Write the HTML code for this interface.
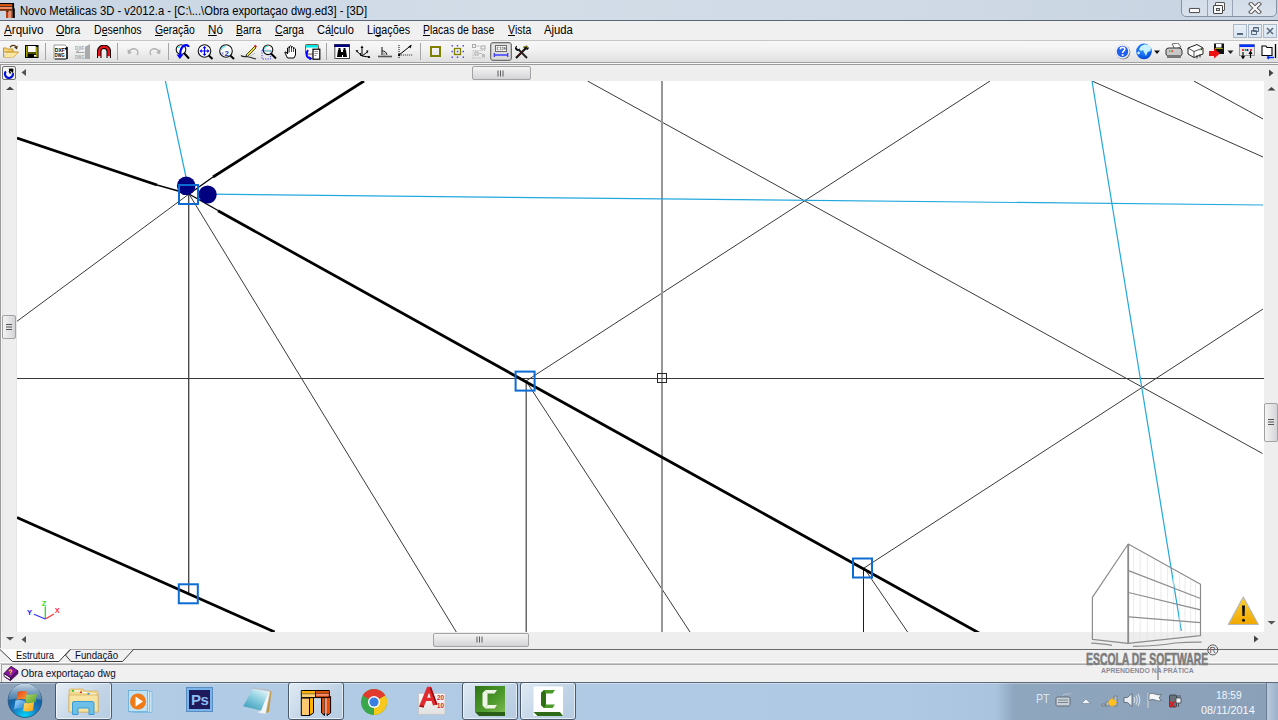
<!DOCTYPE html>
<html><head><meta charset="utf-8">
<style>
*{margin:0;padding:0;box-sizing:border-box}
html,body{width:1278px;height:720px;overflow:hidden;background:#f0f0f0;font-family:"Liberation Sans",sans-serif;position:relative}
.a{position:absolute}
#title{left:0;top:0;width:1278px;height:20px;background:linear-gradient(90deg,#c9d5e3 0%,#d3dde8 40%,#d0dae6 70%,#c7d3e1 100%)}
#titleline{left:0;top:20px;width:1278px;height:1px;background:#5b6577}
#menubar{left:0;top:21px;width:1278px;height:19px;background:#f0f0f0}
.mi{position:absolute;top:22px;font-size:12px;line-height:16px;color:#000;white-space:pre;transform-origin:0 0}
.mi u{text-decoration:none;position:relative}.mi u:after{content:"";position:absolute;left:0;right:0;top:12px;height:1px;background:#000}
#toolbar{left:0;top:41px;width:1278px;height:21px;background:linear-gradient(#f8f8f8,#f2f2f2 40%,#dfdfdf)}
.sep{position:absolute;top:43px;width:1px;height:17px;background:#a5a5a5}
.sb{background:#eeeeee}
</style></head><body>
<div id="title" class="a"></div>
<div id="titleline" class="a"></div>
<div class="a" style="left:0;top:40px;width:1278px;height:1px;background:#c6c6c6"></div>
<div id="toolbar" class="a"></div>
<!-- app icon -->
<svg class="a" style="left:0;top:0" width="16" height="20" viewBox="0 0 16 20">
<rect x="0" y="3" width="14" height="1.5" fill="#000"/>
<rect x="0" y="4.3" width="13" height="2" fill="#e54f00"/>
<rect x="0" y="6.2" width="12.5" height="0.8" fill="#3a1a08"/>
<rect x="0" y="7" width="12.5" height="2" fill="#f28a64"/>
<rect x="0" y="9" width="12.5" height="1.8" fill="#7a2800"/>
<rect x="12.3" y="3.5" width="1.8" height="14.5" fill="#000"/>
<rect x="6" y="11" width="2.5" height="7" fill="#b84010"/>
<rect x="8.5" y="11" width="2.5" height="7" fill="#f5906a"/>
<rect x="11" y="11" width="1.3" height="7" fill="#e05000"/>
<rect x="14" y="8.5" width="0.8" height="9.5" fill="#000"/>
<rect x="6.5" y="10.8" width="2" height="1" fill="#111"/>
</svg>
<div class="a" style="left:20px;top:2.6px;font-size:12px;line-height:16px;color:#000;white-space:pre;transform:scaleX(0.936);transform-origin:0 0">Novo Metálicas 3D - v2012.a - [C:\...\Obra exportaçao dwg.ed3] - [3D]</div>
<!-- caption buttons -->
<div class="a" style="left:1181px;top:-3px;width:96px;height:20px;border:1px solid #8693a5;border-radius:0 0 5px 5px;background:linear-gradient(#d2dce8,#d8e1ec)"></div>
<div class="a" style="left:1207px;top:0;width:1px;height:16px;background:#97a3b3"></div>
<div class="a" style="left:1232px;top:0;width:1px;height:16px;background:#97a3b3"></div>
<div class="a" style="left:1189px;top:8px;width:11px;height:5px;border:1px solid #555;border-radius:1px;background:#fafafa;box-shadow:0 0 1px #888"></div>
<div class="a" style="left:1215px;top:2px;width:10px;height:9px;border:1px solid #555;border-radius:1px;background:#f4f4f4"></div>
<div class="a" style="left:1213px;top:5px;width:10px;height:9px;border:1px solid #444;border-radius:1px;background:#fafafa"></div>
<div class="a" style="left:1216px;top:8px;width:4px;height:3px;border:1px solid #555;background:#cfd8e2"></div>
<svg class="a" style="left:1248px;top:2px" width="14" height="12" viewBox="0 0 14 12">
<path d="M3 2 L11 10 M11 2 L3 10" stroke="#5a5a5a" stroke-width="4.2" stroke-linecap="square"/>
<path d="M3 2 L11 10 M11 2 L3 10" stroke="#fafafa" stroke-width="2.2" stroke-linecap="square"/>
</svg>
<!-- menu -->
<div class="mi" style="left:3.5px;transform:scaleX(0.97)"><u>A</u>rquivo</div>
<div class="mi" style="left:56px;transform:scaleX(0.91)"><u>O</u>bra</div>
<div class="mi" style="left:94px;transform:scaleX(0.88)">D<u>e</u>senhos</div>
<div class="mi" style="left:155px;transform:scaleX(0.865)"><u>G</u>eração</div>
<div class="mi" style="left:208px;transform:scaleX(0.97)"><u>N</u>ó</div>
<div class="mi" style="left:236px;transform:scaleX(0.86)"><u>B</u>arra</div>
<div class="mi" style="left:274.5px;transform:scaleX(0.88)"><u>C</u>arga</div>
<div class="mi" style="left:317px;transform:scaleX(0.92)">Cá<u>l</u>culo</div>
<div class="mi" style="left:367px;transform:scaleX(0.895)">Li<u>g</u>ações</div>
<div class="mi" style="left:423px;transform:scaleX(0.87)"><u>P</u>lacas de base</div>
<div class="mi" style="left:507.5px;transform:scaleX(0.87)"><u>V</u>ista</div>
<div class="mi" style="left:543.5px;transform:scaleX(0.94)">Ajuda</div>
<!-- MDI buttons -->
<div class="a" style="left:1233px;top:24px;width:14px;height:14px;border:1px solid #a9b8c9;background:linear-gradient(#e9f0f7,#d9e5f1)"></div>
<div class="a" style="left:1248px;top:24px;width:14px;height:14px;border:1px solid #a9b8c9;background:linear-gradient(#e9f0f7,#d9e5f1)"></div>
<div class="a" style="left:1263px;top:24px;width:14px;height:14px;border:1px solid #a9b8c9;background:linear-gradient(#e9f0f7,#d9e5f1)"></div>
<div class="a" style="left:1237px;top:33px;width:6px;height:2px;background:#56687c"></div>
<svg class="a" style="left:1248px;top:24px" width="14" height="14" viewBox="0 0 14 14"><path d="M5.5 3.5h5v4h-5z M3.5 6.5h5v4h-5z" fill="none" stroke="#56687c" stroke-width="1"/><path d="M5.5 3.5h5v1h-5z M3.5 6.5h5v1h-5z" fill="#56687c"/></svg>
<svg class="a" style="left:1263px;top:24px" width="14" height="14" viewBox="0 0 14 14"><path d="M4 4L10 10M10 4L4 10" stroke="#56687c" stroke-width="1.5"/></svg>

<div class="a" style="left:0;top:62px;width:1278px;height:1px;background:#a0a0a0"></div>
<div class="a" style="left:0;top:63px;width:1278px;height:1px;background:#f8f8f8"></div>
<div class="a" style="left:0;top:64px;width:1278px;height:1px;background:#9a9a9a"></div>
<!--ICONS-->
<div class="sep" style="left:45px"></div>
<div class="sep" style="left:117px"></div>
<div class="sep" style="left:168px"></div>
<div class="sep" style="left:326px"></div>
<div class="sep" style="left:420px"></div>
<svg class="a" style="left:2px;top:44px" width="17" height="14" viewBox="0 0 17 14">
<path d="M8 3.2 Q11 -0.2 14 2.6" fill="none" stroke="#5a3a10" stroke-width="1.3"/>
<path d="M12.2 3.6 L15.8 1.6 L15 5.6z" fill="#4a3008"/>
<path d="M1.5 4 h3 l1 1 h5.5 v3 h-9.5z" fill="#f3d37a" stroke="#c89628" stroke-width="1"/>
<path d="M1.5 4.5 v8.5 h10 l5-5 h-11 l-3.5 5" fill="#f5dc8a" stroke="#c8962a" stroke-width="1"/>
<path d="M4 9 h11 l-4 4 h-9z" fill="#f8e6a0"/>
</svg>
<svg class="a" style="left:25px;top:45px" width="14" height="13" viewBox="0 0 14 13">
<rect x="0" y="0" width="13.5" height="13" rx="0.5" fill="#000"/>
<rect x="1" y="1" width="1.6" height="11" fill="#a0a000"/>
<rect x="11" y="2" width="1.6" height="10" fill="#a0a000"/>
<rect x="3" y="1" width="7.8" height="6" fill="#fff"/>
<rect x="2.6" y="7.5" width="8.5" height="1" fill="#a0a000"/>
<circle cx="10" cy="10.8" r="1.1" fill="#fff"/>
</svg>
<svg class="a" style="left:53px;top:44px" width="16" height="16" viewBox="0 0 16 16">
<path d="M1 1 h11 l2 2 v12 h-13z" fill="#fff" stroke="#9a9a9a" stroke-width="1"/>
<path d="M14 3 v12 M12 5 l2-1" stroke="#000" stroke-width="1.5" fill="none"/>
<text x="1.8" y="8" font-family="Liberation Sans" font-size="5.5" font-weight="bold" fill="#000" textLength="10" lengthAdjust="spacingAndGlyphs">DXF</text>
<text x="1.8" y="13" font-family="Liberation Sans" font-size="5.5" font-weight="bold" fill="#000" textLength="10" lengthAdjust="spacingAndGlyphs">DWG</text>
<path d="M2 15 h11" stroke="#222" stroke-width="1"/>
</svg>
<svg class="a" style="left:75px;top:44px" width="16" height="15" viewBox="0 0 16 15">
<text x="0" y="6" font-family="Liberation Sans" font-size="6" font-weight="bold" fill="#a8a8a8" textLength="9.5" lengthAdjust="spacingAndGlyphs">DXF</text>
<path d="M1 8.5 h8.5 M1 8.5 l3-2" stroke="#a8a8a8" stroke-width="1.1" fill="none"/>
<text x="0" y="14.5" font-family="Liberation Sans" font-size="6" font-weight="bold" fill="#a8a8a8" textLength="9.5" lengthAdjust="spacingAndGlyphs">DWG</text>
<path d="M10 3 l5-3 v15 h-5z" fill="#aaa"/>
</svg>
<svg class="a" style="left:97px;top:45px" width="14" height="14" viewBox="0 0 14 14">
<path d="M2.2 13 V6.5 A4.8 4.8 0 0 1 11.8 6.5 V13" fill="none" stroke="#000" stroke-width="4.6"/>
<path d="M2.2 12 V6.5 A4.8 4.8 0 0 1 11.8 6.5 V12" fill="none" stroke="#e8141c" stroke-width="2.6"/>
<rect x="1" y="11.3" width="2.4" height="1.6" fill="#fff"/><rect x="10.6" y="11.3" width="2.4" height="1.6" fill="#fff"/>
</svg>
<svg class="a" style="left:127px;top:47px" width="13" height="9" viewBox="0 0 13 9"><path d="M2 4 Q6 0.5 9.5 2.5 Q12 4.5 10 8" fill="none" stroke="#b0b0b0" stroke-width="1.3"/><path d="M0.5 2 L0.8 7 L5 6z" fill="#b0b0b0"/></svg>
<svg class="a" style="left:148px;top:47px" width="13" height="9" viewBox="0 0 13 9"><path d="M11 4 Q7 0.5 3.5 2.5 Q1 4.5 3 8" fill="none" stroke="#b0b0b0" stroke-width="1.3"/><path d="M12.5 2 L12.2 7 L8 6z" fill="#b0b0b0"/></svg>
<svg class="a" style="left:175px;top:44px" width="16" height="16" viewBox="0 0 16 16">
<circle cx="6" cy="5.5" r="4.8" fill="#fff" stroke="#111" stroke-width="1.1"/>
<path d="M9 9 L14 14.5" stroke="#000" stroke-width="2"/>
<path d="M3 4 L5 2" stroke="#0ff" stroke-width="1"/>
<path d="M13.5 3 Q13.5 1 11 1.2 Q7 1.5 5.5 7 L5 11" fill="none" stroke="#0000ff" stroke-width="2.2"/>
<path d="M1.5 10.5 L4.8 15 L8.5 10.5z" fill="#0000ff"/>
</svg>
<svg class="a" style="left:197px;top:44px" width="17" height="16" viewBox="0 0 17 16">
<circle cx="7.5" cy="7" r="6.3" fill="#fff" stroke="#111" stroke-width="1.1"/>
<path d="M11.8 11.5 L15.5 15" stroke="#000" stroke-width="2"/>
<path d="M7.5 2 L5.5 4.2 h4z M7.5 12 L5.5 9.8 h4z M2.5 7 L4.7 5 v4z M12.5 7 L10.3 5 v4z" fill="#0000ff"/>
<path d="M7.5 3.5 V10.5 M3.5 7 H11.5" stroke="#0000ff" stroke-width="1.1"/>
</svg>
<svg class="a" style="left:218px;top:44px" width="17" height="16" viewBox="0 0 17 16">
<circle cx="8" cy="7" r="6.3" fill="#fff" stroke="#111" stroke-width="1.1"/>
<path d="M12.3 11.5 L16 15" stroke="#000" stroke-width="2"/>
<path d="M3 6 Q4 3 7 2.5" fill="none" stroke="#00e8ff" stroke-width="1"/>
<text x="3.3" y="11" font-family="Liberation Sans" font-size="5" fill="#3a3ac0">x</text>
<text x="6.5" y="11.5" font-family="Liberation Sans" font-size="8" font-weight="bold" fill="#3030b0">2</text>
</svg>
<svg class="a" style="left:240px;top:44px" width="17" height="16" viewBox="0 0 17 16">
<path d="M1 11.5 Q3 13 6 12.5 Q10 13 14 14.5 L16 15" fill="none" stroke="#222" stroke-width="1.2"/>
<path d="M6 11 L14.5 2.5 L16 4 L7.5 12.5z" fill="#f0e020" stroke="#222" stroke-width="0.8"/>
<path d="M14 2 L15.2 0.8 L17 2.6 L15.8 3.8z" fill="#e01010"/>
<path d="M5 13 L6 11 L7.5 12.5z" fill="#333"/>
<path d="M9 13 Q12 11 15 9" fill="none" stroke="#aaa" stroke-width="0.8"/>
</svg>
<svg class="a" style="left:261px;top:44px" width="17" height="16" viewBox="0 0 17 16">
<rect x="1" y="6" width="8.5" height="9" fill="none" stroke="#4040ff" stroke-width="1" stroke-dasharray="1.2 1.2"/>
<circle cx="7" cy="5.8" r="4.8" fill="rgba(255,255,255,0.6)" stroke="#111" stroke-width="1.1"/>
<path d="M10 9.5 L15 14.5" stroke="#000" stroke-width="2"/>
<path d="M3.5 5 Q4.5 2.3 7 1.8" fill="none" stroke="#0ee" stroke-width="1"/>
<path d="M3 7 H11" stroke="#40a0a0" stroke-width="1"/>
</svg>
<svg class="a" style="left:284px;top:45px" width="14" height="14" viewBox="0 0 14 14">
<path d="M3.5 13 L1 8 Q0.5 6.5 2 7 L3.5 9 V3 Q4.5 1.5 5.5 3 V1.5 Q6.5 0 7.5 1.5 V2.5 Q8.5 1 9.5 2.5 V3.5 Q10.5 2.5 11.5 4 V10 L10 13z" fill="#fff" stroke="#000" stroke-width="1"/>
<path d="M5.5 3 v4 M7.5 2 v5 M9.5 3 v4" stroke="#000" stroke-width="0.7"/>
<path d="M4 3 v5 h1.5 v-5z" fill="#999"/>
</svg>
<svg class="a" style="left:305px;top:44px" width="16" height="16" viewBox="0 0 16 16">
<rect x="0.5" y="0.5" width="13" height="9.5" rx="1" fill="#fff" stroke="#603020" stroke-width="0.8"/>
<rect x="1" y="1" width="12" height="2.6" fill="#00e8e8"/>
<path d="M3 6 Q0.5 10 2.5 13 L5 14.5" fill="none" stroke="#0000ff" stroke-width="2"/>
<path d="M4 12.2 L7.5 14.5 L4.5 16.5z" fill="#0000ff"/>
<rect x="8" y="5.2" width="6.8" height="10" fill="#fff" stroke="#000" stroke-width="1.2"/>
<path d="M9.5 7.5 h3.5 M9.5 9.5 h3.5 M9.5 11.5 h2" stroke="#777" stroke-width="0.8"/>
</svg>
<svg class="a" style="left:334px;top:44px" width="16" height="15" viewBox="0 0 16 15">
<rect x="0.5" y="0.5" width="15" height="14" fill="#fff" stroke="#444" stroke-width="1"/>
<rect x="0.5" y="0.5" width="15" height="2.5" fill="#000080"/>
<rect x="0" y="3" width="1.5" height="12" fill="#888"/>
<path d="M3 13 L4 6 h3 v2 h2 v-2 h3 l1 7 h-4 v-2 h-1 v2z" fill="#000"/>
<rect x="4.5" y="4" width="2" height="3" fill="#000"/><rect x="9.5" y="4" width="2" height="3" fill="#000"/>
</svg>
<svg class="a" style="left:355px;top:45px" width="16" height="13" viewBox="0 0 16 13">
<path d="M7 11 V2 M7 11 L1.5 6 M7 11 L13 6.5 M7 11 L14 12" stroke="#000" stroke-width="1" fill="none"/>
<path d="M7 0.5 L5.5 3 h3z M0.5 5 L3.5 5.5 L2 7.5z M13.5 5.5 L11 5.5 L12.5 8z" fill="#000"/>
<circle cx="14" cy="12" r="1.1" fill="#000"/>
<path d="M5.5 8 Q5 10 6 11" stroke="#000" stroke-width="1" fill="none"/>
</svg>
<svg class="a" style="left:377px;top:46px" width="16" height="12" viewBox="0 0 16 12">
<path d="M5 1 V9" stroke="#222" stroke-width="1.1"/>
<path d="M1 10.5 H15" stroke="#555" stroke-width="1.6"/>
<path d="M5 5 Q9 4.5 10 9" stroke="#222" stroke-width="1" fill="none"/>
<rect x="6" y="7" width="2" height="2" fill="none" stroke="#777" stroke-width="0.6"/>
</svg>
<svg class="a" style="left:398px;top:44px" width="16" height="16" viewBox="0 0 16 16">
<path d="M1 1 V15" stroke="#000" stroke-width="1" stroke-dasharray="1 1"/>
<path d="M3 11 H15" stroke="#444" stroke-width="1" stroke-dasharray="1.2 0.8"/>
<path d="M1 11 L13 1.5" stroke="#000" stroke-width="1"/>
<circle cx="1.2" cy="11" r="1.2" fill="#000"/>
<path d="M13.8 0.8 L10.5 2.2 L12.5 4.5z" fill="#000"/>
</svg>
<div class="a" style="left:430px;top:46px;width:11px;height:11px;border:2px solid #808000"></div>
<svg class="a" style="left:451px;top:45px" width="14" height="13" viewBox="0 0 14 13"><rect x="3.5" y="3.5" width="6" height="6" fill="none" stroke="#808000" stroke-width="1.3"/><rect x="0.5" y="0.10000000000000009" width="1.4" height="1.4" fill="#3838ff"/><rect x="0.5" y="5.8" width="1.4" height="1.4" fill="#3838ff"/><rect x="0.5" y="11.5" width="1.4" height="1.4" fill="#3838ff"/><rect x="5.8" y="0.10000000000000009" width="1.4" height="1.4" fill="#3838ff"/><rect x="5.8" y="5.8" width="1.4" height="1.4" fill="#3838ff"/><rect x="5.8" y="11.5" width="1.4" height="1.4" fill="#3838ff"/><rect x="11.600000000000001" y="0.10000000000000009" width="1.4" height="1.4" fill="#3838ff"/><rect x="11.600000000000001" y="5.8" width="1.4" height="1.4" fill="#3838ff"/><rect x="11.600000000000001" y="11.5" width="1.4" height="1.4" fill="#3838ff"/></svg>
<svg class="a" style="left:472px;top:44px" width="14" height="15" viewBox="0 0 14 15">
<rect x="0.5" y="0.5" width="3" height="3" fill="none" stroke="#aaa" stroke-width="1"/>
<path d="M4.5 2 h3" stroke="#bbb" stroke-width="1"/>
<rect x="9" y="2" width="4" height="3" fill="none" stroke="#aaa" stroke-width="1"/>
<path d="M1 6.5 h13 M1 14 h13 M1 6.5 v8" stroke="#aaa" stroke-width="0.8" stroke-dasharray="1 1.2"/>
<rect x="3" y="8" width="3" height="3" fill="none" stroke="#aaa" stroke-width="1"/>
<path d="M7 9.5 h3" stroke="#bbb" stroke-width="1"/><rect x="10" y="10" width="3" height="3" fill="#bbb"/>
</svg>
<div class="a" style="left:490px;top:42px;width:22px;height:19px;border:1px solid #707070;border-radius:3px;background:linear-gradient(#e6e6e6,#d8d8d8);box-shadow:inset 0 0 0 1px #bdbdbd"></div>
<svg class="a" style="left:493px;top:45px" width="16" height="13" viewBox="0 0 16 13">
<rect x="2.5" y="0.5" width="11" height="6" fill="#fff" stroke="#6a6a6a" stroke-width="1"/>
<path d="M5.5 2.2 h-1.3 v2.6 h1.3 M6.5 2.2 h1.3 v2.6 h-1.3 M8.8 2.2 h1.2 v2.6 h-1.2 M11.3 2 v1.8 h1.2 M12 2 v3" fill="none" stroke="#555" stroke-width="0.7"/>
<path d="M1.5 10 H14.5" stroke="#3c3cff" stroke-width="1.5"/>
<path d="M1.3 8 v4 M14.7 8 v4" stroke="#3c3cff" stroke-width="1.3"/>
</svg>
<svg class="a" style="left:514px;top:45px" width="15" height="14" viewBox="0 0 15 14">
<path d="M2 13 L12 3" stroke="#000" stroke-width="2"/>
<path d="M3 12 L10 5" stroke="#7a1010" stroke-width="0.8"/>
<path d="M13 13 L5 5" stroke="#222" stroke-width="2"/>
<path d="M9 2 L12.5 0.5 L15 3 L13.5 5 L11 3.8z" fill="#111"/>
<path d="M10 2 L12.5 1.2 L14 3" stroke="#a0a000" stroke-width="1" fill="none"/>
<path d="M1 4 Q1 1 3 0.8 L2.5 2.8 L4 4.3 L6 3.5 Q6 6 3 6z" fill="#000"/>
</svg>
<svg class="a" style="left:1114px;top:43px" width="17" height="17" viewBox="0 0 17 17">
<circle cx="9.2" cy="9.2" r="7" fill="#333" opacity="0.7"/>
<circle cx="8.5" cy="8.5" r="7" fill="#f4f8ff" stroke="#c8d0e0" stroke-width="0.5"/>
<circle cx="8.5" cy="8.5" r="5.7" fill="#2060f0"/>
<path d="M6.3 6.3 Q6.5 4.2 8.6 4.2 Q10.8 4.3 10.8 6.3 Q10.8 7.6 9.3 8.3 Q8.6 8.8 8.6 10" fill="none" stroke="#fff" stroke-width="1.6"/>
<rect x="7.8" y="11.2" width="1.7" height="1.7" fill="#fff"/>
</svg>
<svg class="a" style="left:1135px;top:43px" width="27" height="17" viewBox="0 0 27 17">
<defs><radialGradient id="gg" cx="0.45" cy="0.35" r="0.75"><stop offset="0" stop-color="#3a9cff"/><stop offset="0.7" stop-color="#0a5ae8"/><stop offset="1" stop-color="#0030b0"/></radialGradient></defs>
<circle cx="9" cy="8.4" r="7.8" fill="url(#gg)"/>
<path d="M4 6.5 L6 3 L10 1.2 L14 2 L16 5 L15.5 8 L12.5 9 L11 13 L9.5 10 L8 7 L6 8z" fill="#c8f2ff"/>
<circle cx="3.6" cy="10" r="1.4" fill="#c8f2ff"/>
<path d="M19 7.5 h6 l-3 3.5z" fill="#111"/>
</svg>
<svg class="a" style="left:1165px;top:43px" width="18" height="16" viewBox="0 0 18 16">
<path d="M7 1 L13 0 L16 4 L10 6z" fill="#fff" stroke="#444" stroke-width="0.8"/>
<path d="M1 7 Q1 5 4 5 H14 Q17 5 17 8 V11 Q17 13 14 13 H4 Q1 13 1 11z" fill="#c8c8c8" stroke="#333" stroke-width="1"/>
<path d="M2 12 H16 V15 H2z" fill="#777"/>
<rect x="4" y="7.5" width="1.5" height="1.2" fill="#0c0"/><rect x="6.5" y="7.5" width="1.5" height="1.2" fill="#e00"/>
</svg>
<svg class="a" style="left:1187px;top:44px" width="17" height="15" viewBox="0 0 17 15">
<path d="M1 4 L10 0.5 L16 4 L16 10 L7 13.5 L1 10z" fill="#fff" stroke="#222" stroke-width="1"/>
<path d="M1 4 L7 7.5 L16 4 M7 7.5 V13.5" stroke="#222" stroke-width="0.8" fill="none"/>
<path d="M10 11 v3.5 M13 10 v3.5" stroke="#333" stroke-width="1"/>
<rect x="12" y="5" width="1.5" height="1.2" fill="#0c0"/><rect x="14" y="5" width="1.3" height="1.2" fill="#e00"/>
</svg>
<svg class="a" style="left:1209px;top:43px" width="26" height="17" viewBox="0 0 26 17">
<rect x="5" y="0.5" width="10" height="10.5" fill="#111"/>
<rect x="7" y="1" width="5.5" height="3.5" fill="#fff"/>
<rect x="6" y="5" width="8" height="1" fill="#a0a000"/>
<path d="M0 8 L5 8 L5 5.5 L11 10.5 L5 15.5 L5 13 L0 13z" fill="#ee1111"/>
<path d="M18.5 7.5 h6 l-3 3.5z" fill="#222"/>
</svg>
<svg class="a" style="left:1239px;top:44px" width="16" height="15" viewBox="0 0 16 15">
<rect x="0.5" y="0.5" width="15" height="11" fill="#e8e8e8" stroke="#888" stroke-width="0.8"/>
<rect x="0.5" y="0.5" width="15" height="2.5" fill="#0030ff"/>
<circle cx="4" cy="6" r="1" fill="#e00"/><circle cx="6.5" cy="6" r="1" fill="#0a0"/><circle cx="8.5" cy="6" r="1" fill="#00c"/><circle cx="12" cy="6" r="1" fill="#e00"/>
<path d="M4 8 v6 M2.5 12 L4 14.5 L5.5 12 M11.5 14 v-6 M10 10 L11.5 7.5 L13 10" stroke="#000" stroke-width="1.1" fill="none"/>
</svg>
<svg class="a" style="left:1261px;top:44px" width="17" height="16" viewBox="0 0 17 16">
<path d="M1 2 h4 l1 1.5 h5 v8 H1z" fill="#fff" stroke="#000" stroke-width="1.1"/>
<path d="M14.5 0 V14" stroke="#000" stroke-width="1.3"/>
<path d="M6 13.5 H13 M6 13.5 L8 12 M6 13.5 L8 15" stroke="#0030ff" stroke-width="1.3" fill="none"/>
</svg>
<!--/ICONS-->
<!-- top scrollbar -->
<div class="a sb" style="left:0;top:65px;width:1278px;height:16px"></div>
<!-- left border + left scrollbar -->
<div class="a" style="left:0;top:65px;width:1px;height:584px;background:#9a9a9a"></div><div class="a" style="left:1px;top:65px;width:1px;height:584px;background:#f6f6f6"></div>
<div class="a sb" style="left:2px;top:81px;width:15px;height:567px;border-left:1px solid #e4e4e4;border-right:1px solid #e6e6e6"></div>
<!-- right scrollbar -->
<div class="a sb" style="left:1264px;top:81px;width:14px;height:551px"></div>
<!-- bottom scrollbar -->
<div class="a sb" style="left:2px;top:632px;width:1276px;height:16px"></div>
<!-- drawing -->
<div class="a" style="left:17px;top:81px;width:1247px;height:551px;background:#fff"></div>
<svg class="a" style="left:17px;top:81px" width="1247" height="551" viewBox="17 81 1247 551">
<g stroke="#3a3a3a" stroke-width="1" fill="none">
<line x1="189" y1="194" x2="17" y2="321.3"/>
<line x1="189" y1="194" x2="456.3" y2="632"/>
<line x1="526" y1="381" x2="990" y2="81"/>
<line x1="526" y1="381" x2="690" y2="632"/>
<line x1="587.5" y1="81" x2="1262.5" y2="453.5"/>
<line x1="864" y1="568" x2="907.6" y2="632"/>
<line x1="864" y1="568" x2="1263" y2="309"/>
<line x1="1092" y1="81" x2="1263" y2="157"/>
<line x1="1193.8" y1="81" x2="1263" y2="119"/>
</g>
<g stroke="#333">
<line x1="188.72" y1="194" x2="188.72" y2="594" stroke-width="1.22"/>
<line x1="526.17" y1="383" x2="526.17" y2="632" stroke-width="1.1"/>
</g>
<rect x="863" y="568" width="1" height="64" fill="#1e1e1e"/>
<rect x="661" y="81" width="2" height="551" fill="#969696"/>
<rect x="17" y="378" width="1247" height="1" fill="#3a3a3a"/>
<rect x="657.5" y="373.5" width="9" height="9" fill="none" stroke="#262626" stroke-width="1"/>
<g stroke="#000" stroke-width="2.75" fill="none">
<line x1="17" y1="138" x2="157" y2="185"/>
<line x1="364" y1="81" x2="213" y2="177"/>
<polyline points="218,210.8 480,356.3 700,478.2 979,633"/>
<line x1="17" y1="517.6" x2="274.6" y2="632"/>
</g>
<g stroke="#000" stroke-width="1.3" fill="none">
<line x1="157" y1="185" x2="189" y2="194"/>
<line x1="213" y1="177" x2="189" y2="194"/>
<line x1="189" y1="194" x2="218" y2="210.5"/>
</g>
<g stroke="#22a8dc" stroke-width="1.2" fill="none">
<line x1="165.4" y1="81" x2="186" y2="177"/>
<line x1="207" y1="194.2" x2="1263" y2="205"/>
<line x1="1092" y1="81" x2="1181.3" y2="631"/>
</g>
<g fill="#000080">
<circle cx="186.2" cy="185.8" r="9.3"/>
<circle cx="207.6" cy="194.5" r="9.1"/>
</g>
<g stroke="#0c6cd4" stroke-width="2" fill="none">
<rect x="179" y="185" width="19" height="19"/>
<rect x="515.6" y="371.6" width="19" height="19"/>
<rect x="853" y="558.5" width="19" height="19"/>
<rect x="178.8" y="584.3" width="19" height="19"/>
</g>
</svg>
<!--SB-->
<!-- top scroll restore btn -->
<div class="a" style="left:2px;top:66px;width:14px;height:14px;border:1px solid #6e6e6e;border-radius:2px;background:#f4f4f4"></div>
<svg class="a" style="left:3px;top:67px" width="12" height="12" viewBox="0 0 12 12"><path d="M2.9 4.4 A4 4 0 1 0 9.9 6.3" fill="none" stroke="#0010e0" stroke-width="2.2"/><path d="M5.5 1.8 H10.2 V6.5 Z" fill="#000"/><rect x="6" y="1.8" width="4.2" height="2.2" fill="#000"/><path d="M6.3 4 L7.5 6.5" stroke="#000" stroke-width="1.6"/></svg>
<svg class="a" style="left:20px;top:68px" width="8" height="10" viewBox="0 0 8 10"><path d="M6 1 L1.5 4.5 L6 8z" fill="#555"/></svg>
<svg class="a" style="left:1266px;top:68px" width="10" height="10" viewBox="0 0 10 10"><path d="M3 1.5 L7.5 5 L3 8.5z" fill="#444"/></svg>
<div class="a" style="left:472px;top:66px;width:59px;height:14px;border:1px solid #a2a2a2;border-radius:2px;background:linear-gradient(#f4f4f4,#e6e6e8 45%,#d4d4d8)"></div>
<svg class="a" style="left:496px;top:69px" width="10" height="9" viewBox="0 0 10 9"><path d="M2 1.5v6M4.5 1.5v6M7 1.5v6" stroke="#5a5a5a" stroke-width="1"/></svg>
<!-- left scrollbar -->
<svg class="a" style="left:4px;top:84px" width="12" height="8" viewBox="0 0 12 8"><path d="M2 6 L6 2.5 L10 6z" fill="#444"/></svg>
<div class="a" style="left:2px;top:315px;width:14px;height:24px;border:1px solid #a2a2a2;border-radius:2px;background:linear-gradient(90deg,#f4f4f4,#e6e6e8 45%,#d4d4d8)"></div>
<svg class="a" style="left:4px;top:322px" width="10" height="10" viewBox="0 0 10 10"><path d="M2 2.5h6M2 5h6M2 7.5h6" stroke="#555" stroke-width="1.1"/></svg>
<svg class="a" style="left:4px;top:635px" width="12" height="8" viewBox="0 0 12 8"><path d="M2 2 L6 5.5 L10 2z" fill="#555"/></svg>
<!-- right scrollbar -->
<svg class="a" style="left:1265px;top:84px" width="12" height="8" viewBox="0 0 12 8"><path d="M2.5 6.5 L6.5 3 L10.5 6.5z" fill="#444"/></svg>
<div class="a" style="left:1264px;top:403px;width:14px;height:39px;border:1px solid #a2a2a2;border-radius:2px;background:linear-gradient(90deg,#f4f4f4,#e6e6e8 45%,#d4d4d8)"></div>
<svg class="a" style="left:1266px;top:417px" width="10" height="10" viewBox="0 0 10 10"><path d="M2 2.5h6M2 5h6M2 7.5h6" stroke="#555" stroke-width="1.1"/></svg>
<svg class="a" style="left:1265px;top:619px" width="12" height="8" viewBox="0 0 12 8"><path d="M2.5 2 L6.5 5.5 L10.5 2z" fill="#555"/></svg>
<!-- bottom scrollbar -->
<svg class="a" style="left:20px;top:635px" width="8" height="10" viewBox="0 0 8 10"><path d="M6 1 L1.5 4.5 L6 8z" fill="#555"/></svg>
<div class="a" style="left:433px;top:633px;width:96px;height:14px;border:1px solid #a2a2a2;border-radius:2px;background:linear-gradient(#f4f4f4,#e6e6e8 45%,#d4d4d8)"></div>
<svg class="a" style="left:475px;top:635px" width="10" height="9" viewBox="0 0 10 9"><path d="M2 1.5v6M4.5 1.5v6M7 1.5v6" stroke="#5a5a5a" stroke-width="1"/></svg>
<svg class="a" style="left:1251px;top:634px" width="10" height="10" viewBox="0 0 10 10"><path d="M3 1.5 L7.5 5 L3 8.5z" fill="#444"/></svg>
<!--/SB-->
<!-- tab strip -->
<div class="a" style="left:0;top:649px;width:1278px;height:13px;background:#f0f0f0"></div>
<div class="a" style="left:0;top:648px;width:1278px;height:1px;background:#ededed"></div><div class="a" style="left:70px;top:649px;width:1208px;height:1px;background:#6a6a6a"></div>
<svg class="a" style="left:0;top:648px" width="140" height="15" viewBox="0 648 140 15">
<path d="M70.5 649.5 L65.5 655 L71 661.5 H122.5 L133.5 649.5" fill="#f0f0f0" stroke="#3a3a3a" stroke-width="1"/>
<path d="M-1 649 L12.5 662 H59 L70.5 649z" fill="#fcfcfc"/>
<path d="M0 649.5 L12.5 661.5 H59 L70 649.5" fill="none" stroke="#3a3a3a" stroke-width="1"/>
</svg>
<div class="a" style="left:16px;top:650px;font-size:10px;line-height:11px;color:#0a0a28;white-space:pre;transform:scaleX(0.936);transform-origin:0 0">Estrutura</div>
<div class="a" style="left:74.5px;top:650px;font-size:10px;line-height:11px;color:#0a0a28;white-space:pre;transform:scaleX(0.97);transform-origin:0 0">Fundação</div>
<!-- status -->
<div class="a" style="left:0;top:662px;width:1278px;height:1px;background:#fafafa"></div>
<div class="a" style="left:0;top:663px;width:1278px;height:1px;background:#c8c8c8"></div>
<div class="a" style="left:0;top:664px;width:1278px;height:18px;background:#f0f0f0"></div>
<div class="a" style="left:1px;top:665px;width:1px;height:17px;background:#a0a0a0"></div>
<div class="a" style="left:1px;top:664px;width:1277px;height:1px;background:#a8a8a8"></div>
<svg class="a" style="left:2px;top:664px" width="18" height="18" viewBox="2 664 18 18">
<path d="M4 673.5 L10.5 677.5 L10.5 680.5 L4 676.5z" fill="#f4f4f4" stroke="#2a0a30" stroke-width="0.8"/>
<path d="M10.5 677.5 L17.8 670.8 V673.8 L10.5 680.5z" fill="#6a0a80" stroke="#2a0a30" stroke-width="0.8"/>
<path d="M4 673.5 L11 666.3 L17.8 670.8 L10.5 677.5z" fill="#8c14a8" stroke="#2a0a30" stroke-width="0.9"/>
<path d="M5 677 L10.5 680.5" stroke="#6a0a80" stroke-width="1"/>
<text x="8.5" y="674.5" font-family="Liberation Sans" font-size="7" font-weight="bold" fill="#ffe600" transform="rotate(-8 10 672)">?</text>
</svg>
<div class="a" style="left:20.5px;top:666px;font-size:11px;line-height:15px;color:#0a0a28;white-space:pre;transform:scaleX(0.90);transform-origin:0 0">Obra exportaçao dwg</div>
<!-- taskbar -->
<div class="a" style="left:0;top:682px;width:1278px;height:38px;background:linear-gradient(90deg,#b2cce6 0,#afc9e4 900px,#aac4df 996px,#8ea6be 1014px,#8aa0b8 1278px)"></div>
<div class="a" style="left:0;top:682px;width:56px;height:38px;background:#8ea2b9"></div>
<div class="a" style="left:0;top:682px;width:1278px;height:1px;background:#5c6a78"></div>
<div class="a" style="left:0;top:683px;width:1278px;height:1px;background:rgba(255,255,255,0.35)"></div>
<div class="a" style="left:1266px;top:683px;width:12px;height:37px;border-left:1px solid #6a7c90;background:linear-gradient(90deg,#b8cadd,#9cb2c8)"></div>
<!-- start orb -->
<svg class="a" style="left:6px;top:682px" width="38" height="38" viewBox="0 0 38 38">
<defs>
<radialGradient id="orb" cx="0.5" cy="1" r="0.9"><stop offset="0" stop-color="#00e0ff"/><stop offset="0.45" stop-color="#1a78c0"/><stop offset="1" stop-color="#0c4a80"/></radialGradient>
<linearGradient id="orbt" x1="0" y1="0" x2="0" y2="1"><stop offset="0" stop-color="#e0eaf2" stop-opacity="0.9"/><stop offset="1" stop-color="#7fa0c0" stop-opacity="0.5"/></linearGradient>
</defs>
<circle cx="19" cy="18.6" r="16.8" fill="url(#orb)" stroke="#2a5a88" stroke-width="1"/>
<path d="M2.5 18 A16.5 16.5 0 0 1 35.5 18 Q19 14 2.5 18z" fill="url(#orbt)"/>
<defs>
<linearGradient id="fr" x1="0" y1="0" x2="1" y2="1"><stop offset="0" stop-color="#e8401a"/><stop offset="1" stop-color="#f8a030"/></linearGradient>
<linearGradient id="fg" x1="0" y1="0" x2="1" y2="1"><stop offset="0" stop-color="#b0d860"/><stop offset="1" stop-color="#5aa030"/></linearGradient>
<linearGradient id="fb" x1="0" y1="0" x2="1" y2="1"><stop offset="0" stop-color="#a8d8ff"/><stop offset="1" stop-color="#2080d0"/></linearGradient>
<linearGradient id="fy" x1="0" y1="0" x2="1" y2="1"><stop offset="0" stop-color="#ffe070"/><stop offset="1" stop-color="#f8a010"/></linearGradient>
</defs>
<path d="M11.5 10 Q16 8.5 21 9.5 L20 17.5 Q15 16.5 10.5 18z" fill="url(#fr)"/>
<path d="M20.5 12.5 Q25.5 13.5 31 11.5 L29.5 20 Q24.5 21.5 19.5 20.5z" fill="url(#fg)"/>
<path d="M9.5 18.5 Q14 17.5 19 19 L17.5 27 Q13 25.5 8 27.5z" fill="url(#fb)"/>
<path d="M18.5 20.5 Q23 22 28 20 L27 28.5 Q22 30 17 29z" fill="url(#fy)"/>
</svg>
<!-- buttons -->
<div class="a" style="left:55px;top:682px;width:57px;height:38px;border:1px solid #4a5a6c;border-radius:3px;background:linear-gradient(135deg,#e6eef6,#c2d4e6 60%,#b8cde2);box-shadow:inset 0 0 0 1px rgba(255,255,255,0.6)"></div>
<div class="a" style="left:288px;top:682px;width:56px;height:38px;border:1px solid #4a5a6c;border-radius:3px;background:linear-gradient(135deg,#e0eaf4,#c0d3e6 60%,#b6cbe1);box-shadow:inset 0 0 0 1px rgba(255,255,255,0.6)"></div>
<div class="a" style="left:462px;top:682px;width:56px;height:38px;border:1px solid #4a5a6c;border-radius:3px;background:linear-gradient(135deg,#e0eaf4,#c0d3e6 60%,#b6cbe1);box-shadow:inset 0 0 0 1px rgba(255,255,255,0.6)"></div>
<div class="a" style="left:520px;top:682px;width:56px;height:38px;border:1px solid #4a5a6c;border-radius:3px;background:linear-gradient(135deg,#e0eaf4,#c0d3e6 60%,#b6cbe1);box-shadow:inset 0 0 0 1px rgba(255,255,255,0.6)"></div>
<!-- explorer icon -->
<svg class="a" style="left:68px;top:688px" width="31" height="29" viewBox="0 0 31 29">
<path d="M1 2.5 Q1 1 2.5 1 H15 L16.5 3 H28.5 Q30 3 30 4.5 V24 H1z" fill="#f0d890" stroke="#d8b060" stroke-width="0.8"/>
<rect x="4" y="2" width="2" height="1.6" fill="#1c1"/><rect x="12" y="3.5" width="2" height="1.6" fill="#d33"/><rect x="19.5" y="5" width="2" height="1.6" fill="#29e"/>
<path d="M6 3 h6 M14 4.5 h5 M22 6 h6" stroke="#fff" stroke-width="1.2"/>
<path d="M1 7 H30 V24 H1z" fill="#f8e4a0" stroke="#d8b060" stroke-width="0.8"/>
<path d="M4.5 15 Q4.5 13.5 6 13.5 H24.5 Q26 13.5 26 15 V26.5 H21 V20 H10 V26.5 H4.5z" fill="#6cc0e8" stroke="#3a9ad8" stroke-width="1"/>
</svg>
<!-- WMP -->
<svg class="a" style="left:128px;top:690px" width="26" height="24" viewBox="0 0 26 24">
<rect x="5" y="1.5" width="19" height="21" fill="#cde6f6" stroke="#78b8e0" stroke-width="0.8"/>
<rect x="2.5" y="1" width="19" height="21" fill="#d8eef8" stroke="#78b8e0" stroke-width="0.8"/>
<rect x="0.5" y="0.5" width="19" height="21" fill="#c0e2f4" stroke="#68acd8" stroke-width="0.8"/>
<circle cx="10" cy="11.5" r="8" fill="#f07a18"/>
<path d="M7.5 6.5 L15 11.5 L7.5 16.5z" fill="#fff"/>
</svg>
<!-- PS -->
<div class="a" style="left:186px;top:687px;width:27px;height:25px;background:#7ab4ec;border:1px solid #5a8cc0"></div>
<div class="a" style="left:189px;top:690px;width:21px;height:19px;background:#1e1a5c"></div>
<div class="a" style="left:191px;top:690px;font-size:15px;font-weight:bold;line-height:19px;color:#8cbcf2;letter-spacing:-0.5px">Ps</div>
<!-- notepad -->
<svg class="a" style="left:242px;top:686px" width="31" height="30" viewBox="0 -1 31 30">
<defs><linearGradient id="npg" x1="0.8" y1="0" x2="0.2" y2="1"><stop offset="0" stop-color="#e6f6fa"/><stop offset="0.45" stop-color="#8ccfe0"/><stop offset="1" stop-color="#3a9cb8"/></linearGradient></defs>
<path d="M26.5 3.5 L29.5 4.5 L27 25 L24 26z" fill="#c09848"/>
<path d="M26.5 4 L28 5 L23.5 27 L15 25.5 L19 23.4z" fill="#f2f6f8" stroke="#c8d0d4" stroke-width="0.5"/>
<path d="M11 1.5 L26.5 4 L19 23.4 L1.1 19.2z" fill="url(#npg)"/>
<path d="M10.5 0.3 L27 2.8 L26.5 4.2 L11 1.7z" fill="#b8bcc0"/>
</svg>
<!-- metalicas icon -->
<svg class="a" style="left:300px;top:689px" width="32" height="28" viewBox="0 0 32 28">
<g stroke="#000" stroke-width="1" stroke-linejoin="round">
<path d="M9.5 9 L13.5 7.5 V24 L9.5 26.5z" fill="#ffb000"/>
<rect x="1.3" y="9" width="8.2" height="17.5" fill="#ffc870"/>
<path d="M21.6 7.5 H30.6 V24 L27 26.5 V9 H24.5 V26.5 L21.6 24z" fill="#e85000"/>
<rect x="24.5" y="8" width="3" height="16.5" fill="#f89070" stroke="none"/>
<path d="M1.3 1.5 H15.5 V8.6 H1.3z" fill="#ffd070"/>
<path d="M15.5 1.5 H29.3 V8.6 H15.5z" fill="#c84200"/>
</g>
<rect x="1.8" y="2" width="13.4" height="2.5" fill="#ffb000"/>
<rect x="16" y="2" width="12.8" height="2.2" fill="#e05000"/>
<rect x="16" y="4.6" width="12.8" height="2.2" fill="#f89070"/>
<path d="M1.3 4.8 H15.5 M15.5 4.4 H29.3" stroke="#222" stroke-width="0.5"/>
</svg>
<!-- chrome -->
<svg class="a" style="left:360px;top:688px" width="28" height="28" viewBox="0 0 28 28">
<circle cx="14" cy="14" r="13" fill="#3aa84a"/>
<path d="M14 14 L2.7 7.5 A13 13 0 0 1 25.3 7.5z" fill="#e23a2c"/>
<path d="M14 14 L25.3 7.5 A13 13 0 0 1 14 27z" fill="#f8c81c"/>
<circle cx="14" cy="14" r="6" fill="#fff"/>
<circle cx="14" cy="14" r="4.6" fill="#3a7ee0"/>
</svg>
<!-- autocad -->
<svg class="a" style="left:418px;top:685px" width="30" height="32" viewBox="0 0 30 32">
<defs><linearGradient id="acg" x1="0" y1="0" x2="0" y2="1"><stop offset="0" stop-color="#fafafa"/><stop offset="1" stop-color="#e0e0e0"/></linearGradient></defs>
<rect x="0.5" y="8.3" width="26.5" height="21.3" fill="url(#acg)" stroke="#c4c4c4" stroke-width="0.8"/>
<path d="M1 21.5 L9.2 1.7 L13 1.7 L19.5 19.5 L15 20.5 L13.6 16 L8.2 16 L5.5 22.5z M9.2 12.8 H12.6 L11 7.5z" fill="#e02a30" fill-rule="evenodd"/>
<path d="M13 1.7 L19.5 19.5 L18 20 L12 4z M1 21.5 L5.5 22.5 L6 21 L2.5 20.5z" fill="#980c14"/>
<text x="19" y="14.8" font-family="Liberation Sans" font-size="7.2" font-weight="bold" fill="#e0202a" textLength="7" lengthAdjust="spacingAndGlyphs">20</text>
<text x="19" y="22.5" font-family="Liberation Sans" font-size="7.2" font-weight="bold" fill="#e0202a" textLength="7" lengthAdjust="spacingAndGlyphs">10</text>
</svg>
<!-- camtasia 1 -->
<svg class="a" style="left:475px;top:686px" width="31" height="31" viewBox="0 0 31 31">
<defs><linearGradient id="cg1" x1="0" y1="0" x2="1" y2="1"><stop offset="0" stop-color="#2c7414"/><stop offset="0.6" stop-color="#4e9a2c"/><stop offset="1" stop-color="#7ab850"/></linearGradient></defs>
<rect x="0" y="0" width="30" height="26" fill="url(#cg1)"/>
<path d="M0 26 H30 V30 H4 Z" fill="#2a5e14"/>
<path d="M7.5 7 L10.5 4 H22 L19.5 7.5 H12.5 V19 H22 L19.5 22.6 H10.5 L7.5 19.5 Z" fill="#eef4e6"/>
<path d="M12.5 7.5 L10.5 4 M12.5 19 L10.5 22.6" stroke="#b8d0a8" stroke-width="0.6"/>
</svg>
<!-- camtasia 2 -->
<svg class="a" style="left:533px;top:686px" width="31" height="31" viewBox="0 0 31 31">
<rect x="0.5" y="0.5" width="29.5" height="29.5" fill="#fff"/>
<path d="M8 7 L11 4 H22 L19.5 7.5 H13 V18.5 H22 L19.5 22 H11 L8 19 Z" fill="#4a9a28"/>
<path d="M13 7.5 L11 4 L8 7 V19 L11 22 L13 18.5z" fill="#2e7014"/>
<path d="M0.5 26 H27 L30 30 H4.5 Z" fill="#2e6a18"/>
</svg>
<!-- tray -->
<div class="a" style="left:1036px;top:692px;font-size:12px;line-height:14px;color:#dde6ee;transform:scaleX(0.88);transform-origin:0 0">PT</div>
<svg class="a" style="left:1055px;top:692px" width="17" height="15" viewBox="0 0 17 15">
<path d="M8 4 Q9 1 12 2 T16 0.5" fill="none" stroke="#ccc" stroke-width="0.8"/>
<rect x="1" y="5" width="14" height="9" rx="1.5" fill="#c8d0d8" stroke="#606a74" stroke-width="1"/>
<path d="M3 8 h10 M3 10.5 h10" stroke="#707a84" stroke-width="0.9"/>
</svg>
<svg class="a" style="left:1080px;top:697px" width="12" height="8" viewBox="0 0 12 8"><path d="M1.5 6.5 L6 2 L10.5 6.5z" fill="#f0f4f8" stroke="#708090" stroke-width="0.6"/></svg>
<svg class="a" style="left:1101px;top:693px" width="18" height="14" viewBox="0 0 18 14">
<path d="M1 13 h3 v-2 h-3z M5 13 h3 v-4 h-3z M9 13 h3 v-6.5 h-3z M13 13 h3 v-10 h-3z" fill="#b8c0c8" stroke="#58626c" stroke-width="0.6"/>
<circle cx="11" cy="9.5" r="3.5" fill="#ffc020"/>
<path d="M11 4.5 v1.5 M11 13 v1.5 M6 9.5 h1.5 M14.5 9.5 h1.5" stroke="#ffb000" stroke-width="1"/>
</svg>
<svg class="a" style="left:1123px;top:692px" width="18" height="16" viewBox="0 0 18 16">
<path d="M1 5.5 h3.5 l4.5-4 v13 l-4.5-4 h-3.5z" fill="#e8eef2" stroke="#606a74" stroke-width="0.9"/>
<path d="M11 5 q1.5 3 0 6 M13 3.5 q2.5 4.5 0 9 M15 2 q3.5 6 0 12" fill="none" stroke="#d8e0e8" stroke-width="1.1"/>
</svg>
<svg class="a" style="left:1146px;top:692px" width="17" height="17" viewBox="0 0 17 17">
<path d="M2 1 v15" stroke="#e8ecf0" stroke-width="1.6"/>
<path d="M2 1 v15" stroke="#505a64" stroke-width="0.5"/>
<path d="M3 2 Q6 0.5 9 2 T15.5 2.5 L13 6 L15.5 8.5 Q12 9.5 9 8 T3 8.5z" fill="#f4f6f8" stroke="#606a74" stroke-width="0.8"/>
</svg>
<svg class="a" style="left:1168px;top:692px" width="17" height="17" viewBox="0 0 17 17">
<rect x="1.5" y="3" width="7" height="12" rx="1" fill="#687078" stroke="#303840" stroke-width="0.8"/>
<path d="M8 6 h5 v5 h-5z M10 3 v3 M12 3 v3 M10.5 11 v4" fill="#f0f0f0" stroke="#404850" stroke-width="0.8"/>
<path d="M1.5 9.5 L6.5 15 M6.5 9.5 L1.5 15" stroke="#e01818" stroke-width="1.8"/>
</svg>
<div class="a" style="left:1215.5px;top:687.5px;font-size:11px;line-height:14px;color:#f4f8fc;transform:scaleX(0.93);transform-origin:0 0">18:59</div>
<div class="a" style="left:1200.5px;top:703px;font-size:11px;line-height:14px;color:#f4f8fc;transform:scaleX(0.99);transform-origin:0 0">08/11/2014</div>
<!--EXTRA-->
<svg class="a" style="left:22px;top:596px" width="44" height="28" viewBox="22 596 44 28">
<path d="M45.3 619 V606.5" stroke="#20e020" stroke-width="1.3"/>
<path d="M45.3 619 L53.9 614" stroke="#ff3030" stroke-width="1.2"/>
<path d="M45.3 619 L34 614.3" stroke="#3030ff" stroke-width="1.2"/>
<text x="41.8" y="605.6" font-family="Liberation Sans" font-size="7.5" font-weight="bold" fill="#30e030">Z</text>
<text x="54.8" y="613" font-family="Liberation Sans" font-size="7.5" font-weight="bold" fill="#ff3030">X</text>
<text x="27" y="615.2" font-family="Liberation Sans" font-size="7.5" font-weight="bold" fill="#1a1aff">Y</text>
</svg>
<svg class="a" style="left:1226px;top:595px" width="34" height="32" viewBox="1226 595 34 32">
<defs><linearGradient id="wg" x1="0" y1="0" x2="0" y2="1"><stop offset="0" stop-color="#ffd030"/><stop offset="1" stop-color="#f0a800"/></linearGradient></defs>
<path d="M1243.3 597 L1258.3 624.5 H1228.3z" fill="url(#wg)" stroke="#b8b8b8" stroke-width="1.2" stroke-linejoin="round"/>
<path d="M1242 605.5 h3 l-0.4 10.5 h-2.2z" fill="#111"/>
<circle cx="1243.5" cy="620.3" r="1.5" fill="#111"/>
</svg>
<svg class="a" style="left:1080px;top:535px" width="140" height="145" viewBox="1080 535 140 145">
<g stroke="#e4e4e4" stroke-width="0.8" opacity="0.9"><line x1="1133.7" y1="548.3756000000001" x2="1133.7" y2="642.7900999999999"/><line x1="1140.2" y1="551.9701" x2="1140.2" y2="642.0946"/><line x1="1147.4" y1="555.9517000000001" x2="1147.4" y2="641.3242"/><line x1="1154.5" y1="559.878" x2="1154.5" y2="640.5645"/><line x1="1161" y1="563.4725" x2="1161" y2="639.869"/><line x1="1167.6" y1="567.1223" x2="1167.6" y2="639.1628"/><line x1="1173.6" y1="570.4403" x2="1173.6" y2="638.5208"/><line x1="1179.7" y1="573.8136000000001" x2="1179.7" y2="637.8681"/><line x1="1185.1" y1="576.7998" x2="1185.1" y2="637.2903"/><line x1="1190.6" y1="579.8412999999999" x2="1190.6" y2="636.7017999999999"/><line x1="1195.5" y1="582.551" x2="1195.5" y2="636.1775"/></g>
<g stroke="#8c8c8c" stroke-width="1.2" fill="none" stroke-linejoin="round">
<path d="M1092.4 639.3 V597.4 L1128.2 544 L1200.5 584.3 V635.7 L1128 643.4 Z"/>
<path d="M1128.5 570.6 L1200.5 598.5 M1128.5 592.5 L1200.5 609.8 M1129 616.8 L1200.5 622.7"/>
<path d="M1091.2 643.2 Q1100 643.5 1112 645.3 M1133 646.4 Q1160 646 1175 643 Q1188 642 1201.6 642.2"/>
</g>
<path d="M1128.2 544 V643.4" stroke="#8a8a8a" stroke-width="1.8"/>
<circle cx="1212.8" cy="649.9" r="5" fill="none" stroke="#555" stroke-width="1"/>
<text x="1209.6" y="653.3" font-family="Liberation Sans" font-size="8.5" fill="#555">R</text>
<path d="M1158 664.5 V682" stroke="#666" stroke-width="1"/>
</svg>
<div class="a" style="left:1086px;top:649.5px;font-size:17px;line-height:20px;font-weight:bold;color:#7c7c7c;-webkit-text-stroke:0.6px #7c7c7c;white-space:pre;transform:scaleX(0.612);transform-origin:0 0;letter-spacing:0">ESCOLA DE SOFTWARE</div>
<div class="a" style="left:1101px;top:667px;font-size:7px;line-height:8px;font-weight:bold;color:#8c8c98;white-space:pre;transform:scaleX(0.98);transform-origin:0 0">APRENDENDO NA PRÁTICA</div>
<!--/EXTRA-->
</body></html>
